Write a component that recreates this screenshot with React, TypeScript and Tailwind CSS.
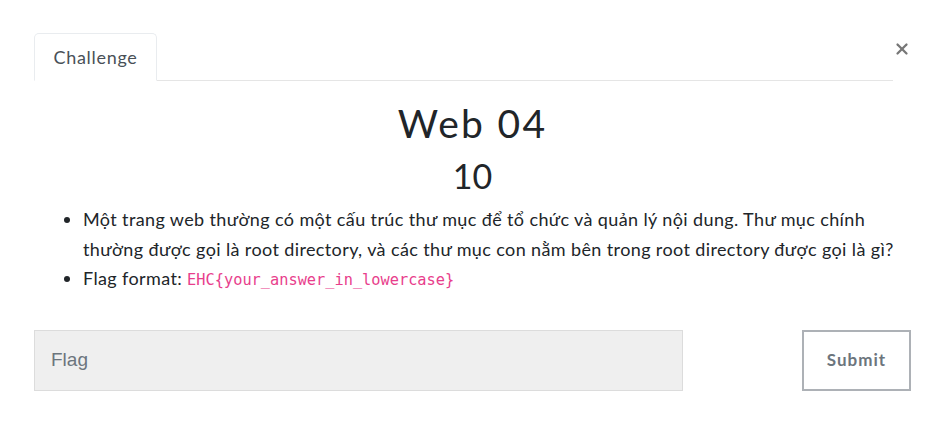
import { X } from 'lucide-react';

const lato = "font-['Lato','Noto_Sans',sans-serif]";

export default function App() {
  return (
    <div className={`${lato} relative w-[940px] h-[438px] bg-white text-[#212529]`}>
      <div className="pl-[34px] pr-[29px] pt-[33px]">
        {/* tabs */}
        <div className="flex items-start">
          <nav className="flex flex-1 border-b border-[#e5e5e5]">
            <button className="-mb-px h-[48px] w-[123px] rounded-t-[5px] border border-b-white border-[#e9ecef] bg-white text-[18px] tracking-[0.7px] text-[#495057]">
              Challenge
            </button>
          </nav>
          <button className="mt-[7px] flex h-[18px] w-[18px] items-center justify-center text-[#777]">
            <X size={18} strokeWidth={3} />
          </button>
        </div>

        <h2 className="mt-[18px] text-center text-[39px] font-normal leading-[48px] tracking-[2.3px]">Web 04</h2>
        <h3 className="mt-[7px] text-center text-[34px] font-normal leading-[43px]">10</h3>

        <ul className="mt-[8px] list-disc pl-[49px] text-[18px] leading-[29.5px] tracking-[0.38px]">
          <li>
            Một trang web thường có một cấu trúc thư mục để tổ chức và quản lý nội dung. Thư mục chính thường được
            gọi là root directory, và các thư mục con nằm bên trong root directory được gọi là gì?
          </li>
          <li>
            Flag format:{' '}
            <code className="font-['DejaVu_Sans_Mono',monospace] text-[15.3px] tracking-normal text-[#e83e8c]">
              EHC{'{'}your_answer_in_lowercase{'}'}
            </code>
          </li>
        </ul>

        {/* flag row */}
        <div className="mt-[34px] flex items-center justify-between">
          <input
            placeholder="Flag"
            className="h-[61px] w-[649px] border border-[#dcdcdc] bg-[#efefef] px-[16px] font-['Liberation_Sans',Arial,sans-serif] text-[19px] placeholder:text-[#6c757d] outline-none"
          />
          <button className="h-[61px] w-[109px] border-2 border-[#adb1b6] bg-white text-[17px] font-bold tracking-[1px] text-[#6c757d]">
            Submit
          </button>
        </div>
      </div>
    </div>
  );
}
